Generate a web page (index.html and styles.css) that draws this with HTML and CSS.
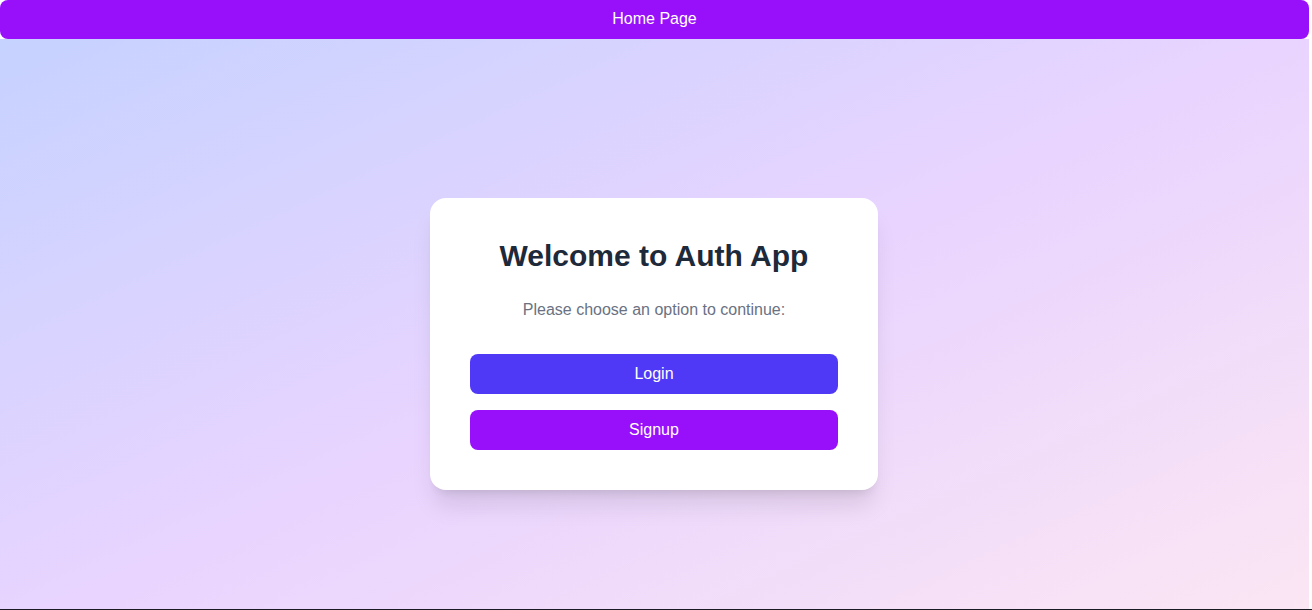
FILE: index.html
```html
<!DOCTYPE html>
<html lang="en">
<head>
<meta charset="utf-8">
<title>Auth App</title>
<link rel="stylesheet" href="styles.css">
</head>
<body>
<div class="page">
  <header class="topbar">Home Page</header>
  <main class="hero">
    <section class="card">
      <h1 class="title">Welcome to Auth App</h1>
      <p class="subtitle">Please choose an option to continue:</p>
      <div class="actions">
        <button class="btn btn-login">Login</button>
        <button class="btn btn-signup">Signup</button>
      </div>
    </section>
  </main>
</div>
<div class="edge"></div>
</body>
</html>
```

FILE: styles.css
```css
* { box-sizing: border-box; }
html, body { margin: 0; padding: 0; background: #ffffff; }
body {
  font-family: "Liberation Sans", Arial, sans-serif;
  overflow: hidden;
}
.page {
  width: calc(100% - 3px);
}
.topbar {
  height: 39px;
  padding-bottom: 2px;
  background: #9810fa;
  color: #ffffff;
  font-size: 16px;
  display: flex;
  align-items: center;
  justify-content: center;
  border-radius: 8px;
}
.hero {
  min-height: 610px;
  padding-right: 1px;
  display: flex;
  align-items: center;
  justify-content: center;
  background: linear-gradient(to bottom right, #c6d2ff, #e9d4ff 50%, #fce7f3);
}
.card {
  width: 448px;
  background: #ffffff;
  border-radius: 16px;
  padding: 40px;
  text-align: center;
  box-shadow: 0 20px 25px -5px rgba(0,0,0,0.1), 0 8px 10px -6px rgba(0,0,0,0.1);
}
.title {
  margin: 0 0 24px;
  font-size: 30px;
  line-height: 36px;
  font-weight: 700;
  color: #1e2939;
}
.subtitle {
  margin: 0 0 32px;
  font-size: 16px;
  line-height: 24px;
  color: #6a7282;
}
.actions {
  display: flex;
  flex-direction: column;
  gap: 16px;
}
.btn {
  display: block;
  width: 100%;
  border: none;
  border-radius: 8px;
  padding: 8px 16px;
  font-family: inherit;
  font-size: 16px;
  line-height: 24px;
  color: #ffffff;
  cursor: pointer;
}
.btn-login { background: #4f39f6; }
.btn-signup { background: #9810fa; }
.edge {
  position: fixed;
  left: 0;
  right: 0;
  bottom: 0;
  height: 1px;
  background: #1a1a24;
}
```
